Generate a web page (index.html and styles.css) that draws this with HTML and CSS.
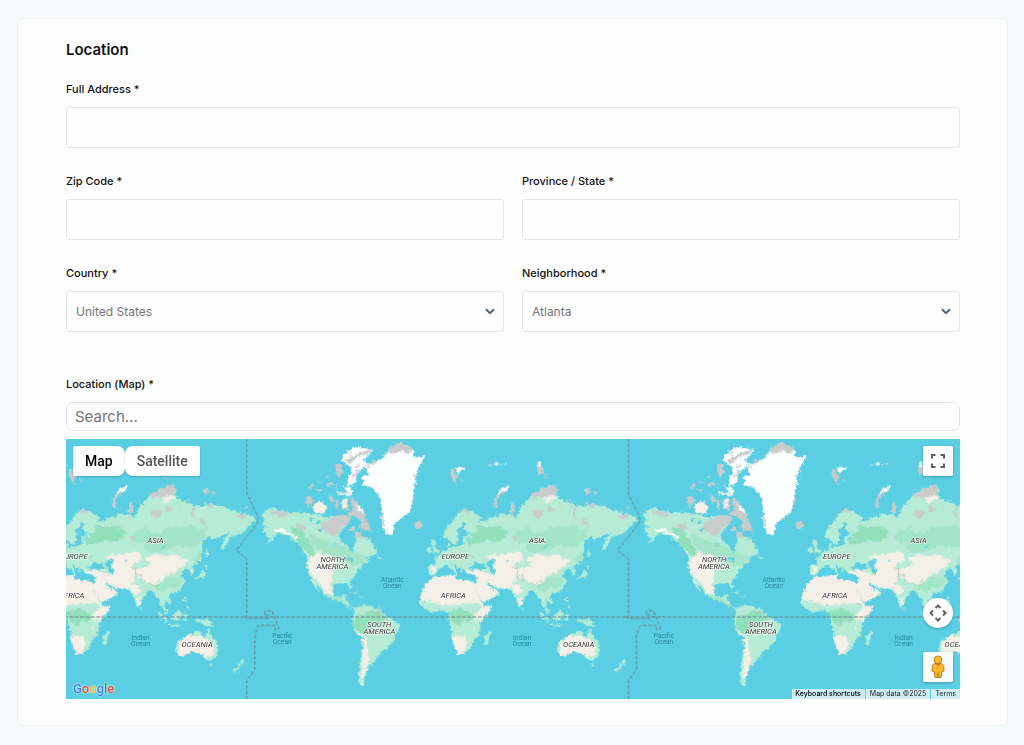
FILE: index.html
```html
<!DOCTYPE html>
<html lang="en">
<head>
<meta charset="utf-8">
<meta name="viewport" content="width=device-width, initial-scale=1">
<title>Location</title>
<link rel="stylesheet" href="styles.css">
</head>
<body>
<form class="card">
  <h2 class="title">Location</h2>
  <div class="fields">
    <div class="field wide">
      <label for="address">Full Address *</label>
      <input class="control" id="address" type="text">
    </div>
    <div class="field">
      <label for="zip">Zip Code *</label>
      <input class="control" id="zip" type="text">
    </div>
    <div class="field">
      <label for="state">Province / State *</label>
      <input class="control" id="state" type="text">
    </div>
    <div class="field">
      <label for="country">Country *</label>
      <div class="select">
        <select class="control" id="country"><option>United States</option></select>
        <svg class="chevron" viewBox="0 0 10 7" aria-hidden="true"><path d="M1 1.2l4 4 4-4"/></svg>
      </div>
    </div>
    <div class="field">
      <label for="area">Neighborhood *</label>
      <div class="select">
        <select class="control" id="area"><option>Atlanta</option></select>
        <svg class="chevron" viewBox="0 0 10 7" aria-hidden="true"><path d="M1 1.2l4 4 4-4"/></svg>
      </div>
    </div>
  </div>
  <div class="field location">
    <label for="search">Location (Map) *</label>
    <input class="search" id="search" type="text" placeholder="Search...">
  </div>
  <div class="map">
    <svg class="world" viewBox="0 0 894 260" preserveAspectRatio="xMidYMid slice" role="img" aria-label="World map">
      <defs>
        <filter id="coast" x="-5%" y="-5%" width="110%" height="110%">
          <feTurbulence type="fractalNoise" baseFrequency="0.09" numOctaves="4" seed="4"/>
          <feDisplacementMap in="SourceGraphic" scale="17" xChannelSelector="R" yChannelSelector="G"/>
        </filter>
        <g id="land">
          <!-- Europe and Asia -->
          <path class="green" d="M84 392V418L100 420 112 414 116 402 130 394 142 390 152 400 166 412 170 404 156 390 165 388 178 400 186 410 192 402 196 412 206 416 226 420 232 436 220 452 230 470 246 500 262 500 300 474 298 466 284 460 276 466 262 444 272 448 284 456 300 460 330 464 340 472 346 490 354 514 362 518 370 492 390 468 404 466 412 484 424 494 430 512 444 538 446 530 436 508 440 494 452 510 458 500 450 482 458 474 480 470 496 452 498 436 486 420 492 408 508 400 516 412 520 424 526 410 520 396 536 384 552 352 548 336 552 316 570 308 590 312 604 306 622 296 634 292 616 312 608 336 612 350 628 326 634 306 650 300 668 296 682 284 698 264 716 262 706 248 690 236 664 232 640 228 616 214 590 210 560 204 555 216 530 212 515 205 490 196 470 188 474 160 458 150 440 158 420 164 396 178 392 188 372 198 380 212 366 206 362 228 352 240 344 252 340 236 344 200 334 204 332 236 320 238 300 240 280 246 262 248 266 254 250 256 236 262 244 248 228 236 214 228 196 224 180 230 164 248 152 264 140 278 130 294 132 312 144 312 152 320 162 332 172 318 176 300 172 290 180 276 188 262 196 266 190 280 196 292 214 290 200 300 190 310 192 322 180 330 160 338 148 340 148 326 140 330 142 342 126 350 112 366 104 370 108 388Z"/>
          <path class="forest" d="M232 268L262 276 306 276 322 290 316 304 296 320 262 318 236 324 204 330 200 314 220 306 208 298 230 290Z"/>
          <path class="forest soft" d="M350 286L372 284 384 272 400 296 430 292 450 276 490 276 520 268 552 284 566 282 560 302 544 320 536 336 500 336 470 330 450 344 420 350 390 352 376 344 384 324 360 326 340 310Z"/>
          <path class="forest soft" d="M540 346L552 356 548 380 532 388 522 376 534 366ZM422 430L450 424 488 430 490 448 470 460 450 454 438 470 424 468 408 456Z"/>
          <path class="sand" d="M256 364L280 356 310 360 346 348 366 354 370 370 356 384 342 388 348 404 350 430 340 444 330 462 300 458 282 454 264 438 258 428 262 444 276 466 284 460 298 470 262 500 246 500 232 474 222 452 232 436 226 420 206 416 200 406 230 404 262 414 280 420 270 392 284 380 272 374Z"/>
          <path class="sand" d="M386 366L410 360 440 362 480 358 490 372 508 378 494 396 472 402 474 412 446 420 434 438 424 446 396 448 372 436 352 420 350 404 372 396 398 388 384 380ZM334 452L358 448 368 468 352 480 340 470Z"/>
          <path class="sand" d="M354 492L366 486 364 512 358 516ZM428 186L462 176 470 190 440 204ZM92 396L108 396 106 412 94 414Z"/>
          <path class="water" d="M206 398L222 386 232 380 238 388 250 384 262 398 258 406 236 402 218 406ZM258 384L272 374 286 376 286 382 276 390 284 402 284 420 272 416 268 400ZM214 366L222 360 216 374ZM318 374L330 378 322 380ZM426 342L444 326 436 342ZM196 312L206 302 206 310Z"/>
          <path class="rock" d="M388 184L396 176 420 166 440 156 460 150 474 160 470 178 440 184 410 188ZM398 226L424 226 428 240 416 252 396 240ZM440 216L460 214 460 228 446 230ZM332 206L342 202 342 232 334 250ZM478 212L488 214 486 222ZM518 214L528 220 526 256 518 240ZM550 246L566 272 564 278 550 262ZM556 204L590 210 588 216 562 214ZM652 240L676 234 686 248 670 256ZM176 228L196 222 212 230 190 232ZM338 304L348 306 344 316 336 312Z"/>
          <path class="ridge" d="M338 398L352 402 350 414 366 420 368 436M394 446L408 450 420 434 426 440M354 426L346 434"/>
          <!-- Africa -->
          <path class="sand" d="M100 424L120 426 150 420 166 418 170 432 190 438 206 434 222 440 226 462 236 484 246 504 256 514 274 510 270 528 252 548 240 562 240 590 234 604 222 612 216 630 204 648 188 658 174 660 166 642 154 606 158 590 152 568 144 548 146 534 126 524 96 532 72 520 58 502 62 478 76 450 92 432Z"/>
          <path class="green" d="M58 494L90 500 120 510 180 510 210 502 236 504 246 518 228 530 226 544 238 556 240 590 234 604 222 612 216 630 204 648 192 652 202 624 194 606 156 600 158 590 152 568 144 548 146 534 126 524 96 532 72 520Z"/>
          <path class="forest" d="M148 530L180 520 206 532 226 546 208 560 190 552 180 572 160 564 146 546Z"/>
          <path class="sand" d="M216 544L234 548 226 560ZM222 572L228 588 220 582Z"/>
          <path class="green" d="M268 586L272 602 262 626 252 628 252 606ZM94 314L104 320 106 338 118 346 114 354 96 356 102 340 94 330ZM80 338L94 336 92 350 82 352ZM558 386L568 394 562 402ZM556 404L562 416 556 428 536 430 532 436 526 430 544 420ZM564 338L570 362 562 366ZM460 546L476 526 488 530 488 546 480 558 462 554ZM416 528L430 536 450 562 442 562 424 544ZM452 566L484 568 484 574 452 572ZM494 536L506 532 500 546 506 556 496 558ZM494 486L500 488 502 500 496 498ZM506 512L514 516 510 526ZM530 550L546 554 566 552 582 570 590 574 560 572 546 562 534 560ZM668 670L678 680 672 688 666 682ZM664 686L668 692 650 710 644 708ZM574 688L584 690 578 698ZM162 412L172 414 168 420ZM366 516L370 522 366 524Z"/>
          <!-- Oceania -->
          <path class="sand" d="M476 620L490 612 510 596 524 600 532 588 552 590 548 602 562 610 568 584 576 600 592 620 600 644 592 668 576 676 556 668 548 656 520 652 498 660 480 662 474 640Z"/>
          <path class="green" d="M568 584L576 600 592 620 600 644 592 668 576 676 556 668 582 660 586 636 572 618 562 608ZM532 588L552 590 548 602 528 602 510 606ZM476 620L482 616 480 650 476 650Z"/>
          <!-- Arctic islands -->
          <path class="rock" d="M38 264L60 262 68 270 58 280 44 276ZM148 108L162 104 168 118 176 122 168 134 166 150 158 132 150 124ZM412 92L424 96 430 114 418 118 410 106ZM432 114L446 128 434 134ZM278 214L290 218 294 190 312 172 328 158 324 152 302 162 286 184ZM550 164L566 162 574 172 560 178ZM582 170L590 172 584 178ZM682 216L692 216 686 220ZM506 192L514 194 510 200ZM180 132L188 134 184 142Z"/>
          <path class="ice" d="M166 98L184 96 198 102 182 110 176 116 168 106ZM264 88L274 88 270 96ZM284 84L296 86 288 92ZM302 86L308 86 304 94ZM314 82L320 84 316 90ZM410 80L422 82 424 94 412 94ZM328 152L302 162 292 176 300 176 326 160Z"/>
          <!-- The Americas -->
          <g transform="translate(-480 0)">
            <path class="green" d="M64 240L80 226 96 218 120 228 150 232 180 232 206 234 240 242 256 248 290 240 320 238 330 252 322 270 306 284 296 300 304 318 322 330 334 350 340 346 344 324 352 302 372 308 390 310 396 328 408 344 412 354 396 364 380 366 372 372 388 372 384 384 366 388 356 402 348 416 334 430 332 444 338 460 330 462 324 448 304 444 284 450 276 466 284 484 300 488 308 478 320 478 316 494 326 500 328 514 344 518 340 522 318 510 300 496 276 492 256 480 244 464 226 444 232 462 240 468 234 470 222 452 212 430 202 408 200 386 202 370 190 350 176 328 160 312 140 302 120 296 104 302 88 322 78 328 92 308 76 300 68 284 82 276 66 266 78 254Z"/>
            <path class="forest" d="M152 276L178 280 196 300 208 322 222 344 232 362 212 360 194 348 176 326 162 306ZM324 356L354 358 372 366 350 378 326 374Z"/>
            <path class="forest soft" d="M208 296L260 318 312 332 334 350 380 362 366 388 336 392 320 380 284 370 240 350 216 330ZM254 472L280 484 300 490 326 510 316 508 276 492Z"/>
            <path class="sand" d="M212 366L232 352 262 358 290 372 280 404 276 430 270 452 280 480 256 474 240 446 216 424 202 400ZM216 436L226 446 238 466 226 456Z"/>
            <path class="rock" d="M242 262L280 246 308 236 330 246 322 268 300 280 296 294 284 304 258 290 236 288 228 282 250 276ZM162 268L190 266 200 284 182 286ZM86 226L118 230 146 236 128 248 100 236ZM344 292L360 292 372 308 346 306Z"/>
            <path class="ice" d="M104 286L124 282 144 290 164 298 174 312 168 312 146 297 124 290 106 294ZM190 350L198 352 196 358Z"/>
            <path class="water" d="M222 262L240 256 246 262 228 270ZM234 280L250 278 240 288ZM206 250L226 250 212 258ZM318 368L336 368 342 380 332 378 326 372 318 376ZM280 318L292 330 286 332Z"/>
            <path class="rock" d="M196 184L218 184 222 196 206 214 196 204ZM204 156L216 146 222 154 210 162ZM224 164L244 160 238 172ZM234 134L246 140 240 144ZM256 124L266 126 262 132ZM258 144L276 140 280 150 262 156ZM286 146L294 150 288 158ZM266 182L282 188 280 202 272 204ZM306 192L322 190 330 214 320 228 306 220ZM330 188L350 200 366 222 378 236 372 246 388 264 392 290 376 284 366 288 356 276 366 264 352 248 330 242 324 226 340 222ZM288 192L298 194 294 224 284 212ZM328 276L342 276 346 286 332 286ZM286 84L302 86 310 112 294 128 288 110ZM520 266L544 264 544 276 528 280ZM14 216L26 216 20 220Z"/>
            <path class="sand" d="M218 212L240 198 258 212 262 222 250 238 226 234ZM290 166L306 174 332 172 338 180 306 180 290 176ZM306 194L318 192 320 220 308 216Z"/>
            <path class="ice" d="M302 78L312 58 336 40 364 36 396 46 386 62 366 76 386 84 364 104 350 116 352 130 338 150 324 152 322 132 334 110 332 98 320 88ZM346 210L360 214 374 236 358 230ZM306 154L334 160 336 176 320 168Z"/>
            <path class="rock" d="M310 78L346 58 392 44 386 54 352 68 332 84ZM336 120L362 96 348 118 338 134ZM320 60L336 50 330 62ZM342 94L364 84 348 100Z"/>
            <path class="ice" d="M404 82L430 70 444 48 470 24 500 30 520 50 522 68 552 64 546 84 534 100 528 130 520 170 520 200 510 230 490 244 466 262 458 300 440 298 430 280 424 250 426 220 416 180 400 158 370 150 366 128 384 118 376 92Z"/>
            <path class="rock" d="M446 42L472 22 504 28 518 46 508 58 490 50 466 52 450 58ZM400 72L408 76 404 88 396 84ZM530 112L526 132 522 120ZM520 182L522 200 514 224 506 232 514 212ZM424 226L432 250 434 278 428 264ZM392 96L380 102 384 94Z"/>
            <path class="green" d="M326 470L350 472 346 476ZM354 478L374 484 360 486ZM410 360L424 368 410 372ZM344 518L360 510 380 512 400 516 420 522 432 534 440 548 460 554 480 568 476 584 462 604 460 622 440 636 428 650 414 660 410 674 394 684 386 702 378 712 380 724 368 736 378 752 366 754 354 740 356 712 362 680 366 640 368 608 352 596 340 576 334 560 342 540Z"/>
            <path class="forest" d="M344 548L370 540 390 526 420 530 440 552 420 570 392 574 374 592 352 590 340 570Z"/>
            <path class="sand" d="M340 576L352 590 370 600 384 620 384 650 390 680 380 700 374 730 362 732 366 700 370 640 368 608 350 596ZM366 738L376 750 368 752Z"/>
            <path class="ridge" d="M398 520L406 530 420 532M404 540L412 534"/>
          </g>
        </g>
        <g id="dateline" transform="translate(600 0)">
          <path d="M85 10V176L119 246V262L53 345 85 372V550H148V540H138L140 527H160L182 582 170 584 168 571H120L109 600V704L85 736V800"/>
        </g>
        <g id="names">
          <g class="continent">
            <text x="411" y="324">ASIA</text>
            <text x="166" y="373">EUROPE</text>
            <text x="160" y="490">AFRICA</text>
            <text x="536" y="635">OCEANIA</text>
            <text x="-202" y="380">NORTH<tspan x="-203" dy="22">AMERICA</tspan></text>
            <text x="-62" y="576">SOUTH<tspan x="-62" dy="21">AMERICA</tspan></text>
          </g>
          <g class="ocean">
            <text x="366" y="615">Indian<tspan x="366" dy="18">Ocean</tspan></text>
            <text x="-23" y="441">Atlantic<tspan x="-23" dy="18">Ocean</tspan></text>
            <text x="-353" y="609">Pacific<tspan x="-353" dy="18">Ocean</tspan></text>
          </g>
        </g>
        <g id="tile">
          <use href="#land" filter="url(#coast)"/>
          <use href="#dateline" class="line"/>
          <path class="line" d="M-470 546H674.500"/>
          <use href="#names"/>
        </g>
      </defs>
      <g transform="translate(334 -4) scale(.33333)">
        <use href="#tile" x="-1144.500"/>
        <use href="#tile"/>
        <use href="#tile" x="1144.500"/>
      </g>
    </svg>
    <div class="types">
      <button class="type on" type="button">Map</button>
      <button class="type" type="button">Satellite</button>
    </div>
    <button class="tool full" type="button" aria-label="Toggle fullscreen">
      <svg viewBox="0 0 14 14"><path d="M1 4.500V1H4.500M9.500 1H13V4.500M13 9.500V13H9.500M4.500 13H1V9.500"/></svg>
    </button>
    <div class="tools">
      <button class="tool round" type="button" aria-label="Map camera controls">
        <svg viewBox="0 0 18 18"><path d="M6.500 4L9 1.500 11.500 4M14 6.500L16.500 9 14 11.500M11.500 14L9 16.500 6.500 14M4 11.500L1.500 9 4 6.500"/></svg>
      </button>
      <button class="tool pegman" type="button" aria-label="Open Street View">
        <svg viewBox="0 0 14 24"><path class="body" d="M4 8.500C1.500 9 1 10.500 1 16L3 16.500 4 22.500H6.600L7 17.500 7.400 22.500H10L11 16.500 13 16C13 10.500 12.500 9 10 8.500Z"/><circle class="body" cx="7" cy="4.800" r="3.900"/><path class="collar" d="M4.500 8.800L7 11.500 9.500 8.800Z"/></svg>
      </button>
    </div>
    <div class="logo"><span class="b">G</span><span class="r">o</span><span class="y">o</span><span class="b">g</span><span class="g">l</span><span class="r">e</span></div>
    <div class="credits">
      <button class="credit keys" type="button">Keyboard shortcuts</button>
      <span class="credit">Map data ©2025</span>
      <a class="credit" href="#terms">Terms</a>
    </div>
  </div>
</form>
</body>
</html>
```
FILE: styles.css
```css
* { box-sizing: border-box; }
body {
  margin: 0;
  padding: 18px 16px 18px 17px;
  background: #f8fbfc;
  color: #111;
  font-family: Inter, sans-serif;
}
.card {
  padding: 21px 47px 26px 48px;
  background: #fefefe;
  border: 1px solid #eef1f2;
  border-radius: 6px;
}
.title { margin: 0 0 20px; font-size: 15px; line-height: 20px; font-weight: 600; }
.fields { display: grid; grid-template-columns: 1fr 1fr; gap: 24px 18px; }
.field { display: flex; flex-direction: column; gap: 9px; min-width: 0; }
.wide { grid-column: 1 / -1; }
label { font-size: 11px; line-height: 18px; font-weight: 500; }
.control {
  display: block;
  width: 100%;
  height: 41px;
  padding: 0 10px;
  background: #fefefe;
  border: 1px solid #e6e6e8;
  border-radius: 3px;
  color: #757575;
  font: 12px/20px Inter, sans-serif;
  appearance: none;
}
.select { position: relative; }
.select .control { padding: 0 9px; }
.chevron {
  position: absolute;
  right: 9px;
  top: 17px;
  width: 10px;
  height: 7px;
  fill: none;
  stroke: #53647a;
  stroke-width: 2;
  pointer-events: none;
}
.location { margin-top: 43px; }
.search {
  width: 100%;
  height: 29px;
  padding: 0 8px;
  background: #fefefe;
  border: 1px solid #dfe5ee;
  border-radius: 7px;
  font: 15px/20px Inter, sans-serif;
}
.search::placeholder { color: #757575; opacity: 1; }
.map {
  position: relative;
  height: 260px;
  margin-top: 8px;
  overflow: hidden;
  background: #5acfe4;
  font-family: Roboto, sans-serif;
}
.world { display: block; width: 100%; height: 100%; }
.green { fill: #b6ebd5; }
.forest { fill: #92dfbc; }
.soft { fill: #a3e5c9; }
.sand { fill: #f4efe7; }
.rock { fill: #c9cccb; }
.ice { fill: #fdfefe; }
.water { fill: #5acfe4; }
.ridge { fill: none; stroke: #a9b0ae; stroke-width: 2; }
.line { fill: none; stroke: #6f8089; stroke-width: 3; stroke-dasharray: 11 5; }
.continent, .ocean { text-anchor: middle; }
.continent {
  font-size: 23px;
  font-style: italic;
  fill: #333;
  stroke: #ffffffd0;
  stroke-width: 4;
  stroke-linejoin: round;
  paint-order: stroke;
}
.ocean { font-size: 20px; fill: #218ba5; }
.types { position: absolute; left: 7px; top: 7px; display: flex; }
.type {
  height: 30px;
  padding: 0 12px;
  border: 0;
  border-radius: 8px 2px 2px 8px;
  background: #fff;
  color: #565656;
  font: 500 14px/20px Roboto, sans-serif;
  box-shadow: 0 1px 2px #0003;
}
.on { border-radius: 2px 8px 8px 2px; color: #000; }
.tool {
  display: grid;
  place-items: center;
  width: 30px;
  height: 30px;
  padding: 0;
  border: 0;
  border-radius: 2px;
  background: #fff;
  box-shadow: 0 1px 3px #0004;
}
.tool svg { fill: none; stroke: #626262; stroke-width: 2; }
.full { position: absolute; right: 7px; top: 7px; }
.full svg { width: 14px; height: 14px; }
.tools { position: absolute; right: 7px; bottom: 17px; display: grid; gap: 24px; }
.round { border-radius: 50%; }
.round svg { width: 18px; height: 18px; }
.pegman svg { width: 14px; height: 24px; }
.pegman .body { fill: #fbb52b; stroke: #b58227; stroke-width: 1; }
.pegman .collar { fill: #e5762c; stroke: none; }
.logo {
  position: absolute;
  left: 7px;
  bottom: 1px;
  font-size: 13px;
  line-height: 18px;
  font-weight: 500;
  text-shadow: 0 0 1px #fff, 0 0 2px #fff;
}
.b { color: #3f78df; }
.r { color: #e34b40; }
.y { color: #f0b429; }
.g { color: #2f9a51; }
.credits { position: absolute; right: 0; bottom: 0; display: flex; gap: 1px; }
.credit {
  padding: 0 4px;
  border: 0;
  background: #cdeef5;
  color: #222;
  font: 7px/10px Inter, sans-serif;
  text-decoration: none;
}
.keys { padding: 0 4px 0 3px; color: #000; font-weight: 500; }
```
